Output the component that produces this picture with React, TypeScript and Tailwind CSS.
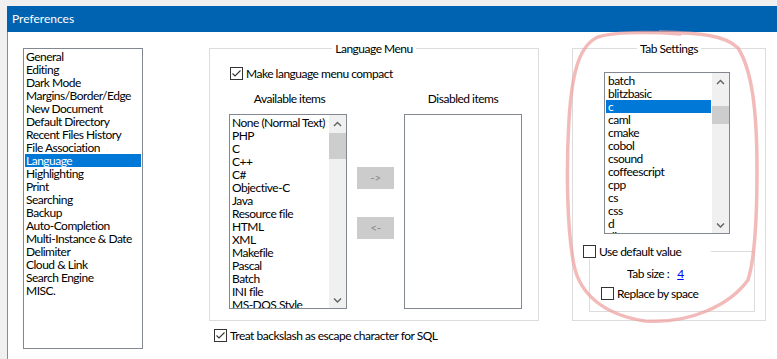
import React from 'react';

const leftItems = [
  'General', 'Editing', 'Dark Mode', 'Margins/Border/Edge', 'New Document', 'Default Directory',
  'Recent Files History', 'File Association', 'Language', 'Highlighting', 'Print', 'Searching',
  'Backup', 'Auto-Completion', 'Multi-Instance & Date', 'Delimiter', 'Cloud & Link', 'Search Engine', 'MISC.'
];

const availItems = [
  'None (Normal Text)', 'PHP', 'C', 'C++', 'C#', 'Objective-C', 'Java', 'Resource file', 'HTML',
  'XML', 'Makefile', 'Pascal', 'Batch', 'INI file', 'MS-DOS Style'
];

const tabItems = [
  'batch', 'blitzbasic', 'c', 'caml', 'cmake', 'cobol', 'csound', 'coffeescript', 'cpp', 'cs', 'css', 'd', 'diff'
];

const Check = ({ checked }: { checked?: boolean }) => (
  <div className="w-[13px] h-[13px] border border-[#333333] bg-white shrink-0 flex items-center justify-center">
    {checked && (
      <svg width="11" height="11" viewBox="0 0 11 11">
        <polyline points="1.5,5.5 4,8 9.5,2.5" fill="none" stroke="#333333" strokeWidth="1.1" />
      </svg>
    )}
  </div>
);

const CheckRow = ({ label, checked }: { label: string; checked?: boolean }) => (
  <div className="flex items-center gap-[3px] h-[15px] leading-[15px] whitespace-nowrap">
    <Check checked={checked} />
    <span>{label}</span>
  </div>
);

const Chevron = ({ down }: { down?: boolean }) => (
  <svg width="9" height="6" viewBox="0 0 9 6">
    <polyline
      points={down ? '1,1.5 4.5,5 8,1.5' : '1,5 4.5,1.5 8,5'}
      fill="none"
      stroke="#606060"
      strokeWidth="1.4"
    />
  </svg>
);

const ScrollBar = ({ thumbTop, thumbHeight }: { thumbTop: number; thumbHeight: number }) => (
  <div className="w-[17px] h-full bg-[#f0f0f0] flex flex-col shrink-0">
    <div className="h-[17px] flex items-center justify-center">
      <Chevron />
    </div>
    <div className="flex-1 flex flex-col">
      <div className="bg-[#cdcdcd]" style={{ marginTop: thumbTop, height: thumbHeight }} />
    </div>
    <div className="h-[17px] flex items-center justify-center">
      <Chevron down />
    </div>
  </div>
);

const Row = ({ text, selected, pad = 'pl-[1px]' }: { text: string; selected?: boolean; pad?: string }) => (
  <div
    className={
      'h-[13px] leading-[13px] whitespace-nowrap ' +
      pad +
      (selected ? ' bg-[#0078d7] text-white' : '')
    }
  >
    {text}
  </div>
);

const GroupTitle = ({ children }: { children: React.ReactNode }) => (
  <div className="self-center -mt-[8px] bg-white px-[3px] leading-[15px] whitespace-nowrap">{children}</div>
);

export default function App() {
  return (
    <div className="relative w-[777px] h-[359px] overflow-hidden bg-[#f0f0f0] pl-[7px] pt-[6px] font-['Lato','Noto_Sans',sans-serif] text-[12px] text-black">
      <div className="h-[353px] flex flex-col">
        <div className="h-[26px] bg-[#0063b1] text-white pl-[5px] leading-[26px]">Preferences</div>

        <div className="flex-1 flex items-start bg-white border-l border-[#8c8c8c] pl-[15px] pt-[16px] tracking-[-0.5px]">
          {/* category list */}
          <div className="w-[120px] h-[301px] border border-[#828790] p-[1px] overflow-hidden shrink-0">
            {leftItems.map(t => (
              <Row key={t} text={t} selected={t === 'Language'} />
            ))}
          </div>

          {/* language menu */}
          <div className="ml-[66px] w-[330px] flex flex-col shrink-0">
            <div className="h-[273px] border border-[#dcdcdc] flex flex-col">
              <GroupTitle>Language Menu</GroupTitle>
              <div className="mt-[10px] ml-[20px]">
                <CheckRow label="Make language menu compact" checked />
              </div>
              <div className="mt-[10px] ml-[19px] flex items-start">
                <div className="w-[118px] flex flex-col">
                  <div className="h-[15px] leading-[15px] text-center pl-[3px]">Available items</div>
                  <div className="mt-[8px] h-[195px] border border-[#828790] flex">
                    <div className="flex-1 p-[1px] overflow-hidden">
                      {availItems.map(t => (
                        <Row key={t} text={t} />
                      ))}
                    </div>
                    <ScrollBar thumbTop={1} thumbHeight={26} />
                  </div>
                </div>

                <div className="ml-[10px] mt-[76px] w-[37px] flex flex-col gap-[28px]">
                  <div className="h-[22px] bg-[#cccccc] text-[#8c8c8c] flex items-center justify-center">-&gt;</div>
                  <div className="h-[22px] bg-[#cccccc] text-[#8c8c8c] flex items-center justify-center">&lt;-</div>
                </div>

                <div className="ml-[10px] w-[118px] flex flex-col">
                  <div className="h-[15px] leading-[15px] text-center">Disabled items</div>
                  <div className="mt-[8px] h-[195px] border border-[#828790]" />
                </div>
              </div>
            </div>
            <div className="mt-[7px] ml-[5px]">
              <CheckRow label="Treat backslash as escape character for SQL" checked />
            </div>
          </div>

          {/* tab settings */}
          <div className="ml-[33px] w-[194px] h-[273px] border border-[#dcdcdc] flex flex-col shrink-0">
            <GroupTitle>Tab Settings</GroupTitle>
            <div className="mt-[16px] ml-[31px] w-[126px] h-[162px] border border-[#828790] flex">
              <div className="flex-1 p-[1px] overflow-hidden">
                {tabItems.map(t => (
                  <Row key={t} text={t} selected={t === 'c'} pad="pl-[2px]" />
                ))}
              </div>
              <ScrollBar thumbTop={16} thumbHeight={18} />
            </div>

            <div className="mt-[17px] ml-[16px] w-[166px] border border-[#dcdcdc] flex flex-col pb-[10px]">
              <div className="-mt-[8px] -ml-[7px] w-[128px] bg-white">
                <CheckRow label="Use default value" />
              </div>
              <div className="mt-[7px] pl-[37px] h-[15px] leading-[15px] flex gap-[8px]">
                <span>Tab size :</span>
                <span className="text-[#0000ff] underline">4</span>
              </div>
              <div className="mt-[5px] pl-[11px]">
                <CheckRow label="Replace by space" />
              </div>
            </div>
          </div>
        </div>
      </div>

      {/* hand-drawn annotation */}
      <svg className="absolute inset-0 pointer-events-none" width="777" height="359" viewBox="0 0 777 359">
        <path
          d="M 680 34 C 640 31, 610 33, 598 37 C 580 45, 572 70, 569 120 C 566 170, 567 230, 574 265 C 580 295, 605 315, 645 321 C 690 324, 730 305, 748 280 C 756 255, 757 210, 757 170 C 757 110, 752 70, 738 48 C 725 35, 700 33, 660 32"
          fill="none"
          stroke="#ee9c9c"
          strokeOpacity="0.7"
          strokeWidth="3.5"
          strokeLinecap="round"
        />
      </svg>
    </div>
  );
}
